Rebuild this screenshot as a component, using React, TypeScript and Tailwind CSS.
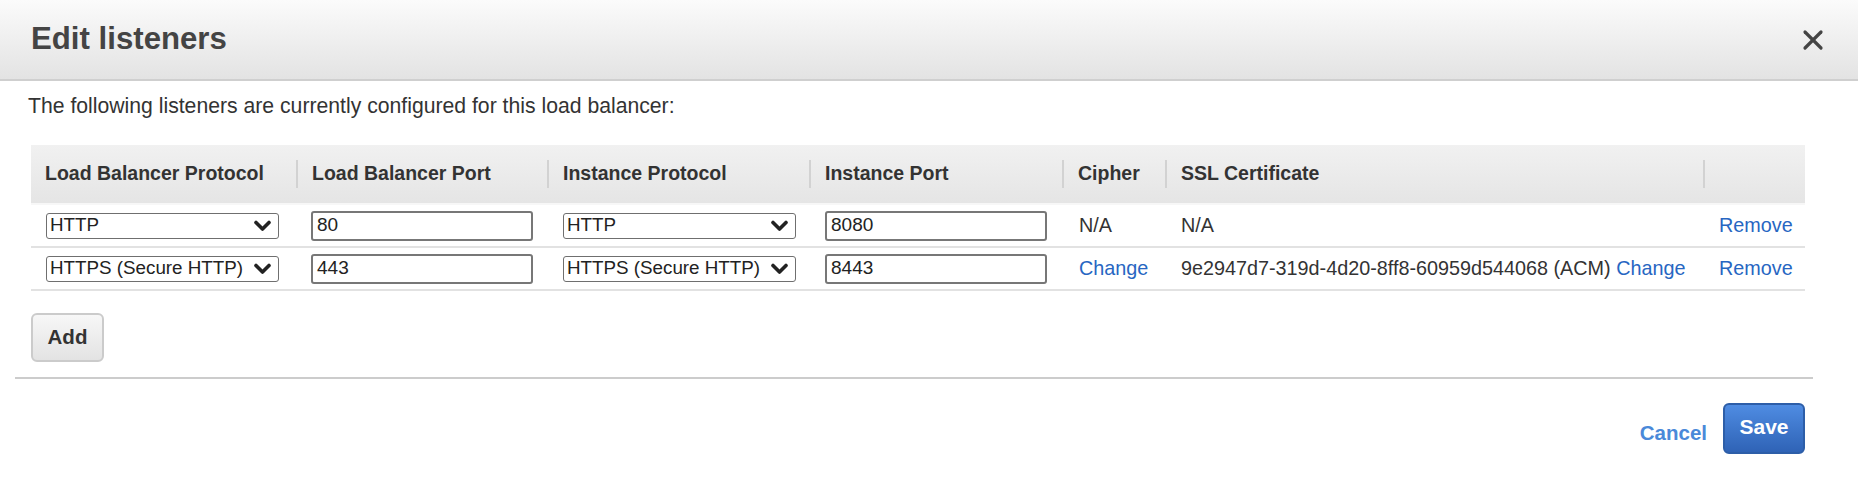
import { X } from "lucide-react";

const cols = [
  { label: "Load Balancer Protocol", w: "w-[265px]" },
  { label: "Load Balancer Port", w: "w-[251px]" },
  { label: "Instance Protocol", w: "w-[262px]" },
  { label: "Instance Port", w: "w-[253px]" },
  { label: "Cipher", w: "w-[103px]" },
  { label: "SSL Certificate", w: "w-[538px]" },
  { label: "", w: "w-[102px]" },
];

const Chevron = () => (
  <svg width="17" height="12" viewBox="0 0 17 12" className="shrink-0">
    <path
      d="M2 2.5 L8.5 9 L15 2.5"
      fill="none"
      stroke="#222"
      strokeWidth="3.6"
      strokeLinecap="round"
      strokeLinejoin="round"
    />
  </svg>
);

const Select = ({ value }: { value: string }) => (
  <div className="flex h-[26px] w-[233px] items-center justify-between rounded-[3px] border border-[#6f6f6f] bg-white pl-[3px] pr-[7px] text-[18.8px] text-[#222]">
    <span className="whitespace-nowrap">{value}</span>
    <Chevron />
  </div>
);

const Input = ({ value }: { value: string }) => (
  <div className="flex h-[30px] w-[222px] items-center rounded-[3px] border-2 border-[#777] bg-white px-[4px] text-[19px] text-[#222]">
    {value}
  </div>
);

const Link = ({ children }: { children: string }) => (
  <span className="cursor-pointer text-[#2766c2]">{children}</span>
);

const rows = [
  {
    lbProto: "HTTP",
    lbPort: "80",
    inProto: "HTTP",
    inPort: "8080",
    cipher: <span>N/A</span>,
    cert: <span>N/A</span>,
  },
  {
    lbProto: "HTTPS (Secure HTTP)",
    lbPort: "443",
    inProto: "HTTPS (Secure HTTP)",
    inPort: "8443",
    cipher: <Link>Change</Link>,
    cert: (
      <span className="whitespace-nowrap">
        9e2947d7-319d-4d20-8ff8-60959d544068 (ACM) <Link>Change</Link>
      </span>
    ),
  },
];

export default function App() {
  return (
    <div className="h-[478px] w-[1858px] overflow-hidden bg-white font-['Liberation_Sans',Arial,sans-serif] text-[#333]">
      <div className="flex h-[81px] items-center justify-between border-b-2 border-[#cfcfcf] bg-gradient-to-b from-[#fbfbfb] to-[#e3e3e3] pl-[31px] pr-[29px]">
        <h1 className="text-[31.2px] font-bold text-[#444]">Edit listeners</h1>
        <X size={32} strokeWidth={2.4} className="text-[#444]" />
      </div>

      <div className="pl-[28px] pt-[12px] text-[21.2px] leading-[25px] text-[#333]">
        The following listeners are currently configured for this load balancer:
      </div>

      <div className="ml-[31px] mt-[27px] w-[1774px]">
        <div className="flex h-[60px] items-center border-b-2 border-[#f7f7f7] bg-gradient-to-b from-[#f1f1f1] to-[#e5e5e5]">
          {cols.map((c, i) => (
            <div
              key={i}
              className={`${c.w} flex h-[28px] items-center pl-[14px] text-[19.5px] font-bold text-[#333] ${
                i > 0 ? "border-l-2 border-[#d2d2d2]" : ""
              }`}
            >
              {c.label}
            </div>
          ))}
        </div>
        {rows.map((r, i) => (
          <div
            key={i}
            className="flex h-[43px] items-center border-b-2 border-[#e2e2e2] text-[19.8px] text-[#333]"
          >
            <div className="w-[265px] pl-[15px]">
              <Select value={r.lbProto} />
            </div>
            <div className="w-[251px] pl-[15px]">
              <Input value={r.lbPort} />
            </div>
            <div className="w-[262px] pl-[16px]">
              <Select value={r.inProto} />
            </div>
            <div className="w-[253px] pl-[16px]">
              <Input value={r.inPort} />
            </div>
            <div className="w-[103px] pl-[17px]">{r.cipher}</div>
            <div className="w-[538px] pl-[16px]">{r.cert}</div>
            <div className="w-[102px] pl-[16px]">
              <Link>Remove</Link>
            </div>
          </div>
        ))}
      </div>

      <div className="ml-[31px] mt-[22px]">
        <button className="h-[49px] w-[73px] rounded-[6px] border-2 border-[#cbcbcb] bg-gradient-to-b from-[#f7f7f7] to-[#e3e3e3] text-[20.5px] font-bold text-[#333]">
          Add
        </button>
      </div>

      <div className="ml-[15px] mt-[15px] w-[1798px] border-t-2 border-[#cccccc]" />

      <div className="mr-[53px] mt-[24px] flex items-center justify-end gap-[16px]">
        <span className="mt-[10px] cursor-pointer text-[20.5px] font-bold text-[#4a89d9]">
          Cancel
        </span>
        <button className="h-[51px] w-[82px] rounded-[6px] border-2 border-[#2d5ea8] bg-gradient-to-b from-[#4f8ce2] to-[#2f63b6] pb-[4px] text-[21px] font-bold text-white">
          Save
        </button>
      </div>
    </div>
  );
}
